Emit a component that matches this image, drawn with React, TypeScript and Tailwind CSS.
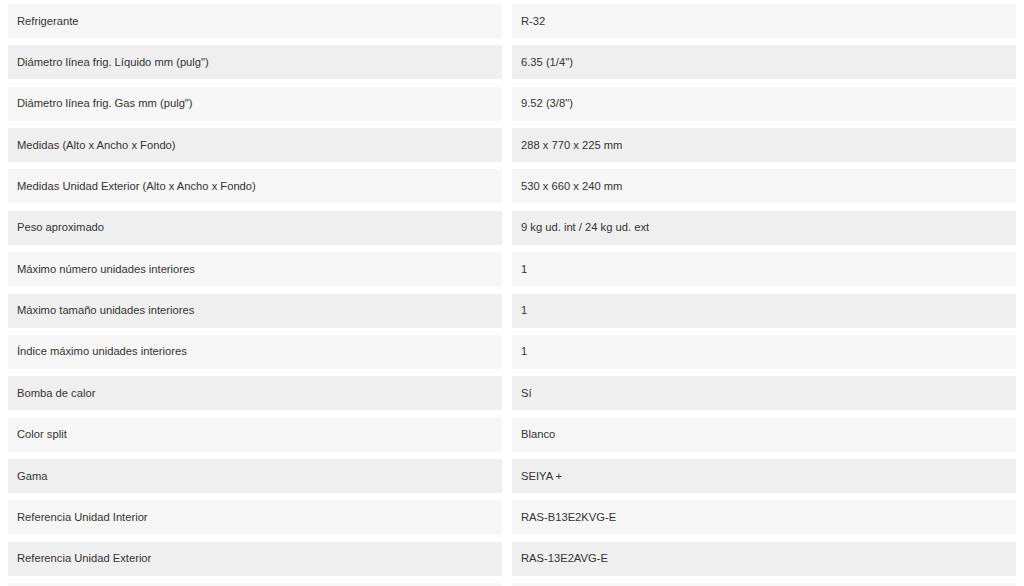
import React from 'react';

// Ficha técnica — two columns, alternating light grey rows
const specs: [string, string][] = [
  ['Refrigerante', 'R-32'],
  ['Diámetro línea frig. Líquido mm (pulg")', '6.35 (1/4")'],
  ['Diámetro línea frig. Gas mm (pulg")', '9.52 (3/8")'],
  ['Medidas (Alto x Ancho x Fondo)', '288 x 770 x 225 mm'],
  ['Medidas Unidad Exterior (Alto x Ancho x Fondo)', '530 x 660 x 240 mm'],
  ['Peso aproximado', '9 kg ud. int / 24 kg ud. ext'],
  ['Máximo número unidades interiores', '1'],
  ['Máximo tamaño unidades interiores', '1'],
  ['Índice máximo unidades interiores', '1'],
  ['Bomba de calor', 'Sí'],
  ['Color split', 'Blanco'],
  ['Gama', 'SEIYA +'],
  ['Referencia Unidad Interior', 'RAS-B13E2KVG-E'],
  ['Referencia Unidad Exterior', 'RAS-13E2AVG-E'],
  // next row only peeks in at the bottom edge
  ['', ''],
];

export default function App() {
  return (
    <div className="h-[586px] overflow-hidden bg-white font-['Liberation_Sans',Arial,sans-serif] text-[11.2px] text-[#333]">
      <div className="grid grid-cols-[494px_504px] gap-x-[10px] gap-y-[7.36px] pl-[8px] pt-[4px]">
        {specs.map(([label, value], i) => {
          const bg = i % 2 === 0 ? 'bg-[#f6f6f6]' : 'bg-[#efefef]';
          return (
            <React.Fragment key={i}>
              <div className={`flex h-[34px] items-center px-[9px] ${bg}`}>{label}</div>
              <div className={`flex h-[34px] items-center px-[9px] ${bg}`}>{value}</div>
            </React.Fragment>
          );
        })}
      </div>
    </div>
  );
}
